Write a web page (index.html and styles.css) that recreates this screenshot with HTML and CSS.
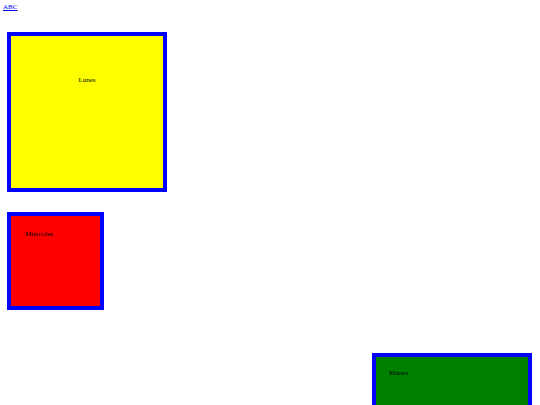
FILE: index.html
```html
<!DOCTYPE html>
<html>
<head>
<meta charset="utf-8">
<link rel="stylesheet" href="styles.css">
</head>
<body>
<div class="top"><a href="#">ABC</a></div>
<div class="box yellow"><div class="label center">Lunes</div></div>
<div class="box red"><div class="label">Miércoles</div></div>
<div class="box green"><div class="label">Martes</div></div>
</body>
</html>
```
FILE: styles.css
```css
html, body {
  margin: 0;
  padding: 0;
  background: #ffffff;
}
body {
  font-family: "Liberation Serif", serif;
  font-size: 7px;
  line-height: 8px;
  color: #000000;
  overflow: hidden;
}
.top {
  height: 9px;
  padding: 3px 0 0 3px;
}
.top a {
  color: #0000ee;
  text-decoration: underline;
}
.box {
  box-sizing: border-box;
  border: 4px solid #0000ff;
  margin-left: 7px;
}
.yellow {
  width: 160px;
  height: 160px;
  margin-top: 20px;
  background: #ffff00;
  padding-top: 40px;
}
.center {
  text-align: center;
}
.red {
  width: 97px;
  height: 98px;
  margin-top: 20px;
  background: #ff0000;
  padding: 14px 0 0 14px;
}
.green {
  width: 160px;
  height: 120px;
  margin-top: 43px;
  margin-left: 372px;
  background: #008000;
  padding: 12px 0 0 13px;
}
```
